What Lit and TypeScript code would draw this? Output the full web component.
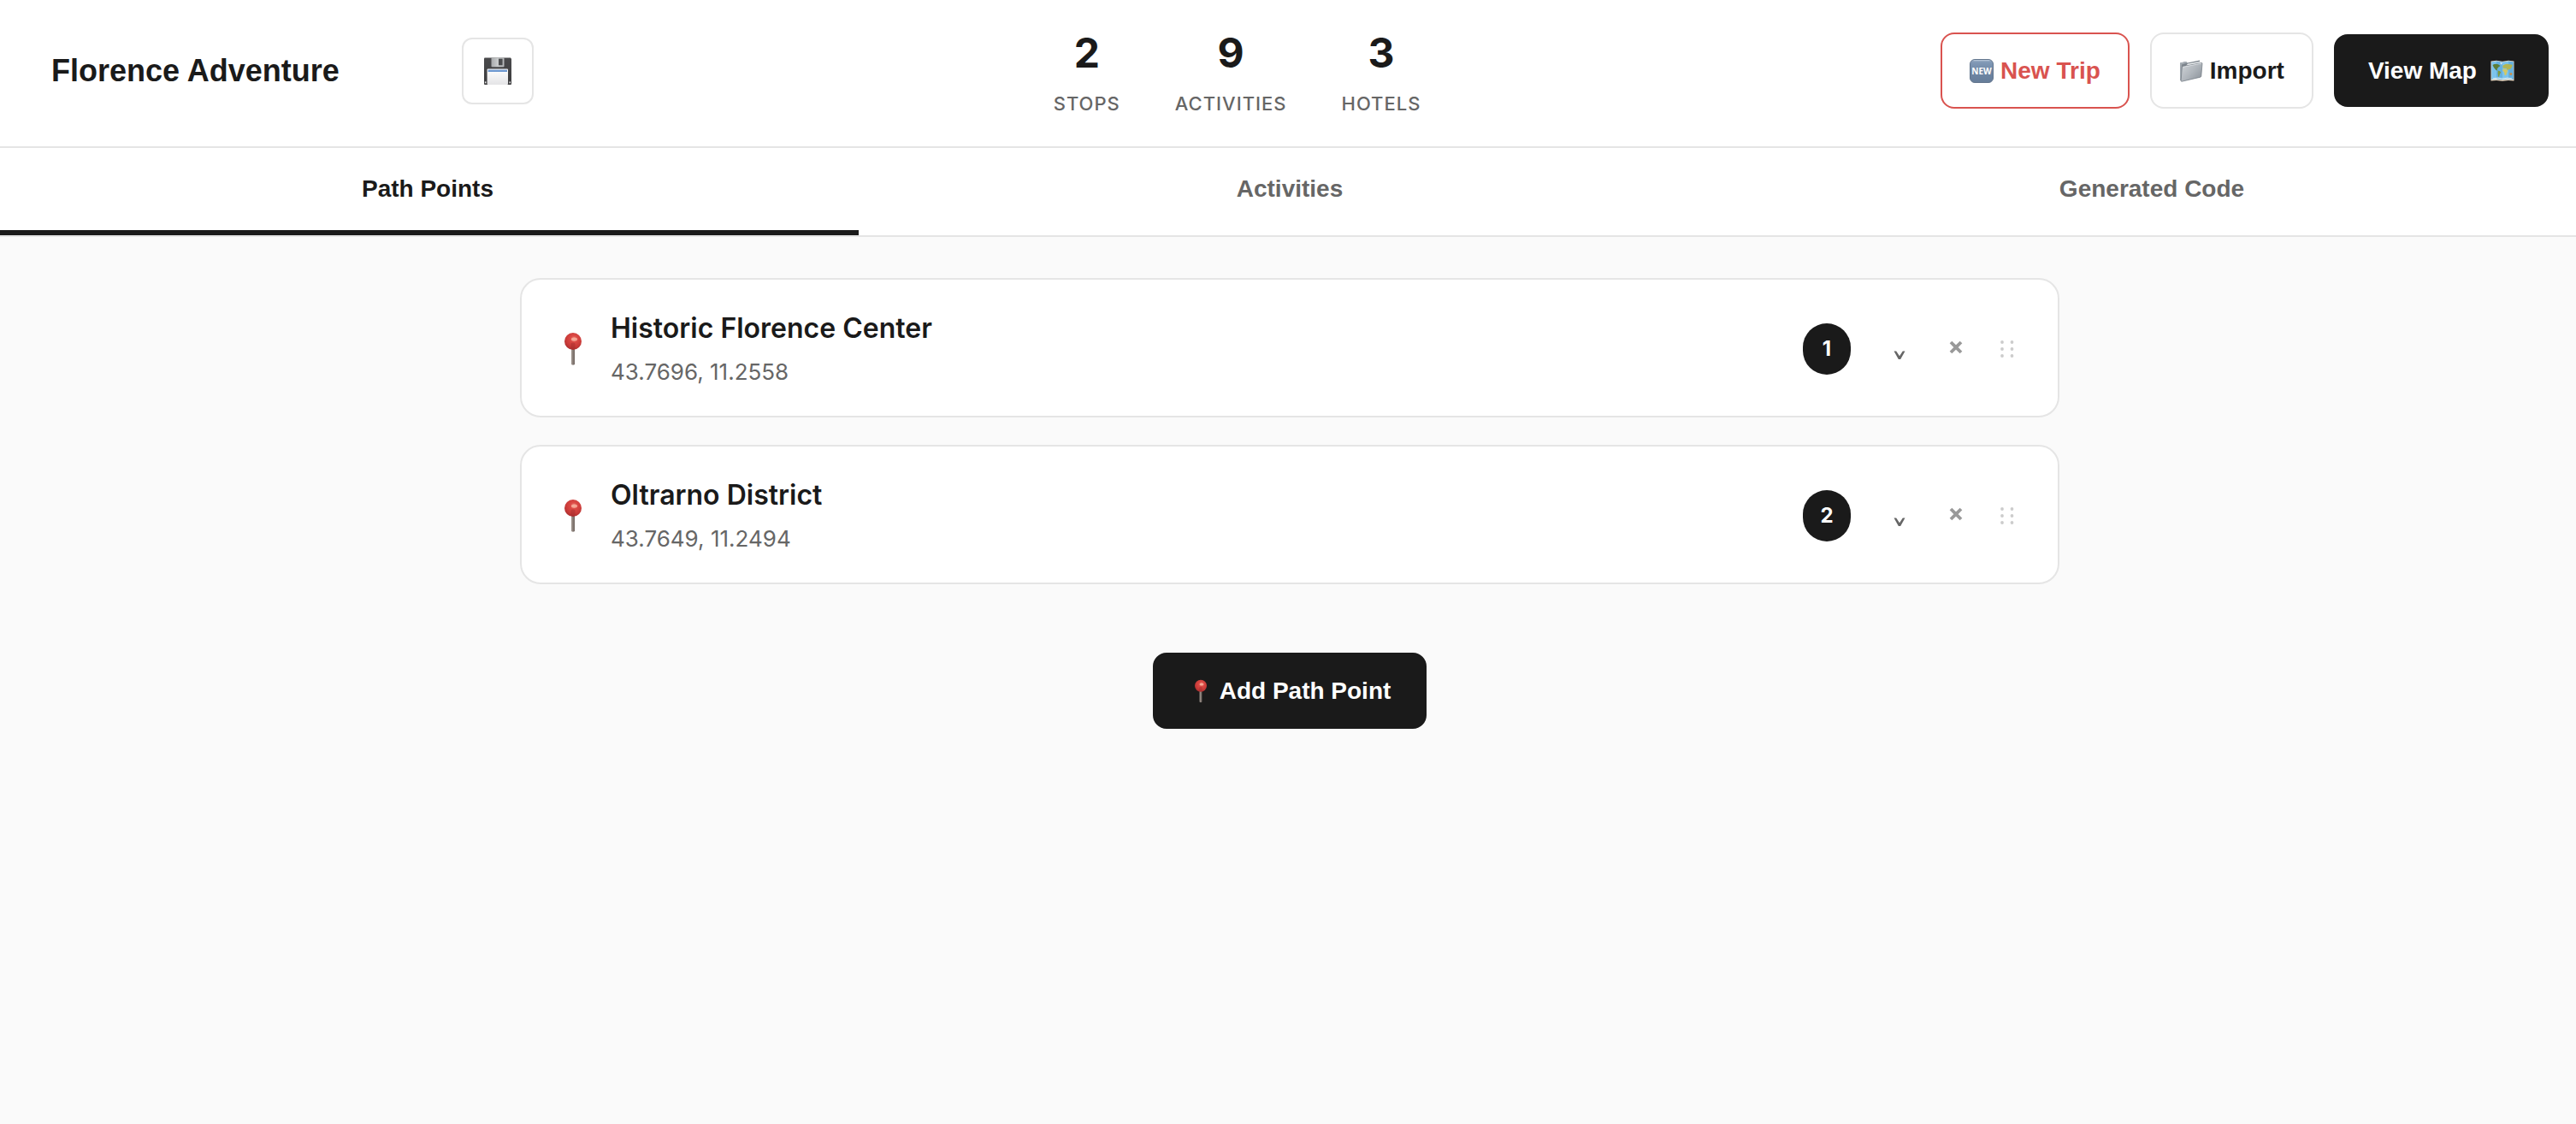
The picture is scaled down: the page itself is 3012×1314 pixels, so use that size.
import { LitElement, html, css } from "lit";
import { customElement, property, state } from "lit/decorators.js";
import { classMap } from "lit/directives/class-map.js";

interface Stat {
  value: number;
  label: string;
}

interface PathPoint {
  name: string;
  lat: string;
  lng: string;
}

const pinIcon = html`<svg class="icon" viewBox="0 0 40 40" aria-hidden="true">
  <defs>
    <radialGradient id="pin-head" cx="0.55" cy="0.36" r="0.62">
      <stop offset="0" stop-color="#f08b7c" />
      <stop offset="0.3" stop-color="#dc4a45" />
      <stop offset="0.75" stop-color="#c93a38" />
      <stop offset="1" stop-color="#b03030" />
    </radialGradient>
    <linearGradient id="pin-needle" x1="0" x2="1" y1="0" y2="0">
      <stop offset="0" stop-color="#a59b94" />
      <stop offset="0.45" stop-color="#8c817b" />
      <stop offset="1" stop-color="#6d625d" />
    </linearGradient>
  </defs>
  <path d="M18 19h4v19q-2 1.600-4 0z" fill="url(#pin-needle)" />
  <circle cx="20" cy="11" r="10" fill="url(#pin-head)" />
  <ellipse cx="21.500" cy="8.600" rx="3.600" ry="2.200" fill="#f9b9a6" opacity="0.750" />
  <path d="M17.500 13.500q2.500-2 5 0v6.200q-2.500 1-5 0z" fill="#9c2a2a" opacity="0.400" />
</svg>`;

const floppyIcon = html`<svg class="icon" viewBox="0 0 32 32" aria-hidden="true">
  <defs>
    <linearGradient id="disk-body" x1="0" x2="0" y1="0" y2="1">
      <stop offset="0" stop-color="#4a4a4c" />
      <stop offset="1" stop-color="#3c3c3e" />
    </linearGradient>
    <linearGradient id="disk-shutter" x1="0" x2="1" y1="0" y2="0">
      <stop offset="0" stop-color="#a9abad" />
      <stop offset="0.5" stop-color="#c9cbcc" />
      <stop offset="1" stop-color="#b4b6b8" />
    </linearGradient>
    <linearGradient id="disk-label" x1="0" x2="0" y1="0" y2="1">
      <stop offset="0" stop-color="#ffffff" />
      <stop offset="1" stop-color="#e4e4e6" />
    </linearGradient>
  </defs>
  <path d="M1 0.500h30l1 1.200V31q0 1-1 1H1q-1 0-1-1V1.500q0-1 1-1z" fill="url(#disk-body)" />
  <path d="M8.500 0.500h15v10q0 .8-.8.8H9.300q-.8 0-.8-.8z" fill="url(#disk-shutter)" />
  <rect x="17" y="1.700" width="4.600" height="7.600" fill="#4b4c4e" />
  <rect x="3.600" y="13.600" width="24.400" height="18.400" rx="1" fill="url(#disk-label)" />
  <rect x="4.600" y="14.600" width="22.400" height="2.400" fill="#6d98d0" />
  <rect x="0.900" y="28.400" width="1.500" height="1.900" fill="#e8e8e8" />
  <rect x="29.500" y="28.400" width="1.500" height="1.900" fill="#e8e8e8" />
</svg>`;

const newIcon = html`<svg class="icon" viewBox="0 0 28 28" aria-hidden="true">
  <defs>
    <linearGradient id="new-face" x1="0" x2="0" y1="0" y2="1">
      <stop offset="0" stop-color="#9fb2c9" />
      <stop offset="0.12" stop-color="#8199b6" />
      <stop offset="0.5" stop-color="#7088a6" />
      <stop offset="1" stop-color="#667d99" />
    </linearGradient>
  </defs>
  <rect x="0.500" y="0.500" width="27" height="27" rx="5.500" fill="url(#new-face)" stroke="#62758d" />
  <path d="M5 1.700h18" stroke="#c9d5e3" stroke-linecap="round" opacity="0.700" />
  <text x="14" y="18" class="new-text" text-anchor="middle">NEW</text>
</svg>`;

const folderIcon = html`<svg class="icon" viewBox="0 0 28 28" aria-hidden="true">
  <defs>
    <linearGradient id="folder-front" x1="0" x2="1" y1="0.1" y2="0.9">
      <stop offset="0" stop-color="#cfd3d7" />
      <stop offset="0.5" stop-color="#b0b6bc" />
      <stop offset="1" stop-color="#8b929a" />
    </linearGradient>
  </defs>
  <path d="M1.200 4.400 8 3l1.600 1.500L24 1.600V5L3 24.500 1.200 25z" fill="#7d858d" />
  <path d="M10 5.600 24 3v2.200L8 8z" fill="#e9ecee" />
  <path d="M1.200 4.400 8 3l1.200 1.400-6.400 2v17.800L1.200 25z" fill="#a5acb3" />
  <path d="M4.400 8.600 26 4.500q1-.2 1 .8L25.800 20q-.1.9-1 1.200L3.200 26.200Q2 26.400 2.100 25.200L3.300 9.800q.1-1 1.100-1.200z" fill="url(#folder-front)" stroke="#6f7780" stroke-width="0.700" />
  <path d="M4.500 9.300 26 5.200" stroke="#eef0f2" stroke-width="0.800" opacity="0.800" />
</svg>`;

const mapIcon = html`<svg class="icon" viewBox="0 0 28 28" aria-hidden="true">
  <path d="M0.500 2.500 7 1.800l7 1 7-1 6.500.7v23L21 25l-7 .8L7 25l-6.500.6z" fill="#e8d9c4" />
  <path d="M1.200 3.200 7 2.600l7 1 7-1 5.800.6v20.600l-5.800-.6-7 .8-7-.8-5.800.6z" fill="#7cc3ec" />
  <path d="M7 2.600l7 1v20.600l-7-.8zM21 2.600l5.800.6v20.600l-5.800-.6z" fill="#4f9fd4" opacity="0.500" />
  <path d="M2.500 7q3.500-2 7-.5l2 1.500-2.200 1.600L7.500 12l1 1.500-2-.6L4 10z" fill="#5d7d35" />
  <path d="M8.800 13.500q2.800.3 3.400 2.100l-1.500 2.600-.7 2.700-1-.6-.4-3.600z" fill="#7f9a3e" />
  <path d="M11 4.200q2.500-.8 3 .6l-1.300 2z" fill="#d9e8ef" />
  <path d="M14.500 7.500q3-2 6-1.600l5.200.8-.6 2.600-2.300 2.900-1.600-.5-1.300 2-1.300-2.700-4.300-.5z" fill="#b3b552" />
  <path d="M14.500 11.800q2.800-1 5 .6l.5 1.700-1.700 4.600-1.600.5-.7-3.600-1.700-1.900z" fill="#d2c867" />
  <path d="M22.400 16.600l2.300-.6 1 1.900-1.700 1-1.700-.6z" fill="#d08f45" />
  <path d="M3 22.800l6-.6 5 .8 6-.8 5 .6" stroke="#e9f4f8" stroke-width="0.900" fill="none" />
</svg>`;

@customElement("path-point-card")
export class PathPointCard extends LitElement {
  @property({ attribute: false }) point!: PathPoint;
  @property({ type: Number }) order = 1;

  static styles = css`
    :host {
      display: block;
    }
    .card {
      display: flex;
      align-items: center;
      gap: 24px;
      padding: 37px 40px 35px;
      background: #fff;
      border: 2px solid #e5e5e5;
      border-radius: 24px;
    }
    .pin {
      display: flex;
      width: 40px;
    }
    .icon {
      width: 40px;
      height: 40px;
    }
    .text {
      display: flex;
      flex: 1;
      flex-direction: column;
      gap: 16px;
    }
    .name {
      margin: 0;
      font-size: 32px;
      font-weight: 600;
      line-height: 39px;
      color: #1a1a1a;
    }
    .coords {
      margin: 0;
      font-size: 26px;
      line-height: 32px;
      color: #666;
    }
    .actions {
      display: flex;
      align-items: center;
      gap: 16px;
    }
    .badge {
      display: flex;
      align-items: center;
      justify-content: center;
      width: 56px;
      height: 60px;
      margin-right: 16px;
      border-radius: 28px;
      background: #1a1a1a;
      color: #fff;
      font-size: 24px;
      font-weight: 700;
    }
    .action {
      display: flex;
      align-items: center;
      justify-content: center;
      width: 50px;
      height: 50px;
      padding: 0;
      border: 0;
      background: none;
      cursor: pointer;
    }
    .handle {
      width: 38px;
      cursor: grab;
    }
    .glyph {
      width: 24px;
      height: 32px;
      flex: none;
    }
  `;

  render() {
    return html`
      <article class="card">
        <span class="pin">${pinIcon}</span>
        <div class="text">
          <h2 class="name">${this.point.name}</h2>
          <p class="coords">${this.point.lat}, ${this.point.lng}</p>
        </div>
        <div class="actions">
          <span class="badge">${this.order}</span>
          <button class="action" type="button" aria-label="Expand">
            <svg class="glyph" viewBox="0 0 24 32" aria-hidden="true">
              <path d="M5.500 18.500h2.700l3.800 5.800 3.800-5.800h2.700l-5.300 9.500h-2.400z" fill="#666" />
            </svg>
          </button>
          <button class="action" type="button" aria-label="Remove">
            <svg class="glyph" viewBox="0 0 24 32" aria-hidden="true">
              <path d="M6 8l12 12M18 8L6 20" stroke="#999" stroke-width="3.800" />
            </svg>
          </button>
          <button class="action handle" type="button" aria-label="Reorder">
            <svg class="glyph" viewBox="0 0 24 32" fill="#ccc" aria-hidden="true">
              <circle cx="6" cy="8" r="1.900" />
              <circle cx="17.500" cy="8" r="1.900" />
              <circle cx="6" cy="16" r="1.900" />
              <circle cx="17.500" cy="16" r="1.900" />
              <circle cx="6" cy="24" r="1.900" />
              <circle cx="17.500" cy="24" r="1.900" />
            </svg>
          </button>
        </div>
      </article>
    `;
  }
}

@customElement("app-root")
export class AppRoot extends LitElement {
  @state() private activeTab = 0;

  private readonly tabs = ["Path Points", "Activities", "Generated Code"];

  private readonly stats: Stat[] = [
    { value: 2, label: "Stops" },
    { value: 9, label: "Activities" },
    { value: 3, label: "Hotels" },
  ];

  private readonly points: PathPoint[] = [
    { name: "Historic Florence Center", lat: "43.7696", lng: "11.2558" },
    { name: "Oltrarno District", lat: "43.7649", lng: "11.2494" },
  ];

  static styles = css`
    :host {
      display: block;
      min-height: 100vh;
      overflow: hidden;
      background: #fafafa;
      color: #1a1a1a;
      font-family: Inter, "Liberation Sans", sans-serif;
    }
    * {
      box-sizing: border-box;
    }
    .page {
      margin: 0 -8px 0 -4px;
    }
    .header {
      display: flex;
      align-items: center;
      justify-content: space-between;
      padding: 36px 40px;
      background: #fff;
      border-bottom: 2px solid #e5e5e5;
    }
    .trip,
    .buttons {
      display: flex;
      align-items: center;
      gap: 24px;
      margin-bottom: 6px;
    }
    .trip-name {
      width: 480px;
      padding: 16px 24px;
      border: 0;
      background: none;
      color: inherit;
      font: 700 36px/42px "Liberation Sans", Arial, sans-serif;
    }
    .button {
      display: flex;
      align-items: center;
      gap: 8px;
      height: 89px;
      padding: 0 32px;
      border: 2px solid #e5e5e5;
      border-radius: 16px;
      background: #fff;
      color: #1a1a1a;
      font: 700 28px/32px "Liberation Sans", Arial, sans-serif;
      white-space: nowrap;
      cursor: pointer;
    }
    .danger {
      border-color: #d9534f;
      color: #d9534f;
    }
    .dark {
      border-color: #1a1a1a;
      background: #1a1a1a;
      color: #fff;
    }
    .view-map {
      gap: 16px;
      height: 85px;
      padding: 0 38px;
    }
    .add {
      padding: 0 40px;
    }
    .save {
      height: 78px;
      padding: 0 24px;
      border-radius: 12px;
    }
    .icon {
      width: 28px;
      height: 28px;
      flex: none;
    }
    .save .icon {
      width: 32px;
      height: 32px;
    }
    .new-text {
      fill: #fff;
      font: 700 10px "Open Sans", sans-serif;
    }
    .stats {
      display: flex;
      gap: 64px;
      margin: 0;
    }
    .stat {
      display: flex;
      flex-direction: column-reverse;
      align-items: center;
      gap: 19px;
    }
    .stat-value {
      margin: 0;
      font-size: 48px;
      font-weight: 700;
      line-height: 52px;
    }
    .stat-label {
      color: #666;
      font-size: 22px;
      font-weight: 500;
      line-height: 28px;
      letter-spacing: 1px;
      text-transform: uppercase;
    }
    .tabs {
      display: flex;
      background: #fff;
      border-bottom: 2px solid #e5e5e5;
    }
    .tab {
      flex: 1;
      padding: 32px 0;
      border: 0;
      border-bottom: 6px solid transparent;
      background: none;
      color: #666;
      font: 700 28px/32px "Liberation Sans", Arial, sans-serif;
      cursor: pointer;
    }
    .tab.active {
      border-bottom-color: #1a1a1a;
      color: #1a1a1a;
    }
    .content {
      display: flex;
      flex-direction: column;
      align-items: center;
      gap: 80px;
      max-width: 1800px;
      margin: 0 auto;
      padding: 48px 0;
    }
    .list {
      display: flex;
      flex-direction: column;
      gap: 32px;
      width: 100%;
      margin: 0;
      padding: 0;
      list-style: none;
    }
  `;

  render() {
    return html`
      <div class="page">
        <header class="header">
          <div class="trip">
            <input class="trip-name" type="text" aria-label="Trip name" value="Florence Adventure" />
            <button class="button save" type="button" aria-label="Save">${floppyIcon}</button>
          </div>
          <dl class="stats">
            ${this.stats.map(
              (stat) => html`
                <div class="stat">
                  <dt class="stat-label">${stat.label}</dt>
                  <dd class="stat-value">${stat.value}</dd>
                </div>
              `
            )}
          </dl>
          <div class="buttons">
            <button class="button danger" type="button">${newIcon}<span>New Trip</span></button>
            <button class="button" type="button">${folderIcon}<span>Import</span></button>
            <button class="button dark view-map" type="button"><span>View Map</span>${mapIcon}</button>
          </div>
        </header>
        <nav class="tabs" role="tablist">
          ${this.tabs.map(
            (tab, i) => html`
              <button
                type="button"
                role="tab"
                aria-selected=${i === this.activeTab ? "true" : "false"}
                class=${classMap({ tab: true, active: i === this.activeTab })}
                @click=${() => (this.activeTab = i)}
              >
                ${tab}
              </button>
            `
          )}
        </nav>
        <main class="content">
          <ul class="list">
            ${this.points.map(
              (point, i) => html`<li><path-point-card .point=${point} .order=${i + 1}></path-point-card></li>`
            )}
          </ul>
          <button class="button dark add" type="button">${pinIcon}<span>Add Path Point</span></button>
        </main>
      </div>
    `;
  }
}
